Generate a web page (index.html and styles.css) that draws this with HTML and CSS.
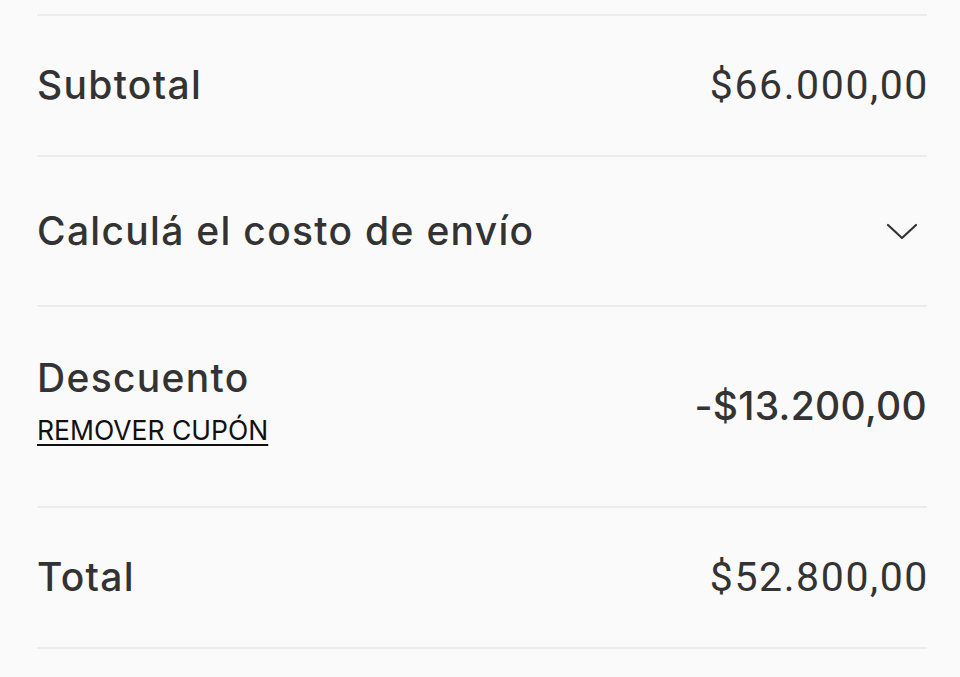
FILE: index.html
```html
<!DOCTYPE html>
<html lang="es">
<head>
<meta charset="utf-8">
<link rel="stylesheet" href="styles.css">
</head>
<body>
<div class="summary">
  <div class="row row-short">
    <span class="label">Subtotal</span>
    <span class="price">$66.000,00</span>
  </div>
  <div class="row row-ship">
    <span class="label">Calculá el costo de envío</span>
    <svg class="chevron" width="34" height="20" viewBox="0 0 34 20" aria-hidden="true">
      <path d="M3 4 L17 17 L31 4" fill="none" stroke="#333" stroke-width="2.2" stroke-linecap="round" stroke-linejoin="round"/>
    </svg>
  </div>
  <div class="row row-disc">
    <div class="disc-left">
      <span class="label">Descuento</span>
      <a class="coupon" href="#">REMOVER CUPÓN</a>
    </div>
    <span class="label amount">-$13.200,00</span>
  </div>
  <div class="row row-short">
    <span class="label">Total</span>
    <span class="price">$52.800,00</span>
  </div>
</div>
</body>
</html>
```

FILE: styles.css
```css
html, body {
  margin: 0;
  padding: 0;
  background: #fafafa;
}
body {
  width: 960px;
  height: 677px;
  overflow: hidden;
  font-family: "Inter", "Liberation Sans", sans-serif;
  color: #333333;
}
.summary {
  margin: 14px 33px 0 37px;
}
.row {
  display: flex;
  justify-content: space-between;
  align-items: center;
  border-top: 2px solid #ebecee;
}
.row:last-child {
  border-bottom: 2px solid #ebecee;
}
.row-short {
  padding: 45px 0 46px;
}
.row-ship {
  padding: 50px 0;
}
.row-disc {
  padding: 47px 0 58px;
}
.label {
  font-size: 39px;
  line-height: 48px;
  font-weight: 500;
  letter-spacing: 1.3px;
}
.amount {
  letter-spacing: 0.3px;
  margin-top: 10px;
}
.price {
  font-family: "Roboto", "Liberation Sans", sans-serif;
  font-size: 41px;
  line-height: 48px;
  font-weight: 400;
  letter-spacing: 1.6px;
  margin-right: -2px;
}
.disc-left {
  display: flex;
  flex-direction: column;
}
.coupon {
  margin-top: 10px;
  font-size: 26.5px;
  line-height: 36px;
  color: #111111;
  text-decoration: underline;
  text-decoration-thickness: 2px;
  text-underline-offset: 4px;
}
.chevron {
  margin-right: 8px;
}
```
